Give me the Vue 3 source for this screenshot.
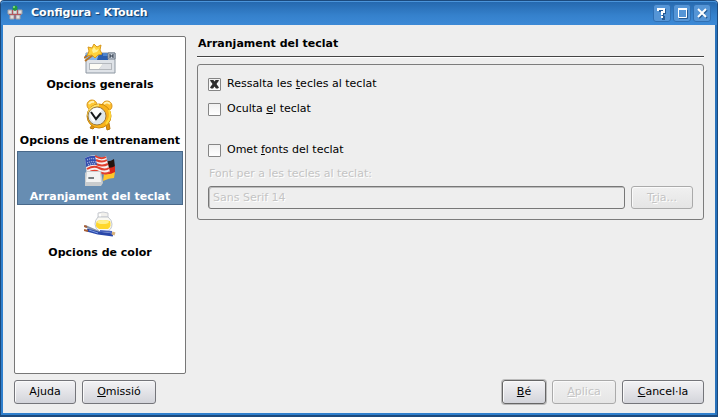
<script setup>
import { ref } from 'vue'

const pages = ['Opcions generals', "Opcions de l'entrenament", 'Arranjament del teclat', 'Opcions de color']
const current = ref(2)
const highlight = ref(true)
const hide = ref(false)
const override = ref(false)
const font = ref('Sans Serif 14')
</script>

<template>
  <div class="window">
    <header class="titlebar">
      <svg class="app-icon" viewBox="0 0 16 16" aria-hidden="true">
        <path d="M1 5h4v4H1zM6 5h4v4H6zM11 5h4v4h-4zM3 10h4v4H3zM9 10h4v4H9z" fill="#e4dedc" stroke="#a3a1a5" />
        <path d="M5.500 5v4M10.500 5v4M2 9.500h12M8 10v4" stroke="#b5565b" fill="none" />
        <path d="M8 3v3" stroke="#3d5a48" />
        <circle cx="8" cy="3" r="2.500" fill="#249a3c" />
        <circle cx="7" cy="2" r="1" fill="#8de58d" />
      </svg>
      <h1>Configura - KTouch</h1>
      <button class="wm" type="button" aria-label="Ajuda de la finestra">
        <svg viewBox="0 0 16 16"><path class="shade" d="M5 6h2V5h4v3H9v3M8 12h2v2H8" /><path d="M4 6V4h6v3H8v3M8 11v2" /></svg>
      </button>
      <button class="wm" type="button" aria-label="Maximitza">
        <svg viewBox="0 0 16 16"><path class="shade thin" d="M13.500 5v8.500H5" /><path class="thin" d="M4.500 4v8.500h8V4.500" /><path d="M4 4h9" /></svg>
      </button>
      <button class="wm" type="button" aria-label="Tanca">
        <svg viewBox="0 0 16 16"><path class="shade" d="M5 5l8 8M13 5l-8 8" /><path d="M4 4l8 8M12 4l-8 8" /></svg>
      </button>
    </header>

    <div class="body">
      <nav class="pages">
        <button
          v-for="(name, i) in pages"
          :key="name"
          type="button"
          class="page"
          :class="{ selected: i === current }"
          @click="current = i"
        >
          <svg v-if="i === 0" viewBox="0 0 32 32" aria-hidden="true">
            <path d="M2 10h29v20H2z" fill="#dfe3e8" stroke="#8d97a2" />
            <path d="M2 10h17l-4 7H2z" fill="#86b6ea" />
            <path d="M15 10h9v7H13z" fill="#2c5fae" />
            <path d="M19 10h5v3h-5z" fill="#4f86cf" />
            <path d="M24 10h7v6h-7z" fill="#d3dae4" stroke="#6c7886" />
            <path d="M26 11v4M29 11v4M26 13h3" stroke="#243040" />
            <path d="M5 20h23v7H5z" fill="#b4b8bd" />
            <path d="M6 21h13l-4 5H6z" fill="#fdfcf5" />
            <path d="M19 21h8v5H15z" fill="#dfe1e5" />
            <path d="M0 15l6-4M1 18l8-6" stroke="#ba7221" stroke-width="2" />
            <path d="M1 13l6-3" stroke="#4a78bd" />
            <path d="M10 1l3 3 4-2-1 5 2 4-4 1-3 3-3-3-5 1 2-5-1-4 4 1z" fill="#ffd23c" stroke="#d9991d" />
            <path d="M10 4l2 3 3-1-2 3-4 1-1-3z" fill="#fff298" />
          </svg>
          <svg v-else-if="i === 1" viewBox="0 0 32 32" aria-hidden="true">
            <path d="M8 26l-2 3 3 1 3-3M22 26l1 5 3-1-1-6" fill="#e4930a" stroke="#b97a10" />
            <circle cx="8" cy="6" r="5" fill="#ffc934" stroke="#d8951c" />
            <circle cx="23" cy="7" r="5" fill="#ffbd2b" stroke="#d8951c" />
            <path d="M5 5q2-3 5-2M20 5q3-3 6 0" stroke="#fff1b0" stroke-width="2" fill="none" />
            <circle cx="15" cy="17" r="12" fill="#f9b21a" stroke="#c98a12" />
            <path d="M4 17Q5 7 15 6" stroke="#ffe36a" stroke-width="2" fill="none" />
            <circle cx="13" cy="17" r="9" fill="#dfe7ea" stroke="#9a7b42" />
            <path d="M6 16a7 7 0 0 1 12-5l-8 12q-4-2-4-7" fill="#fff" />
            <path d="M7 13l5 7 5-6" stroke="#171a1c" stroke-width="2" fill="none" />
            <path d="M25 11q3 8-3 14" stroke="#ffda38" stroke-width="2" fill="none" />
          </svg>
          <svg v-else-if="i === 2" viewBox="0 0 32 32" aria-hidden="true">
            <path d="M21 6q5 1 9-2l1 8q-4 3-9 1z" fill="#25140f" />
            <path d="M22 12q5 2 9-1v7q-4 3-10 2z" fill="#d82518" />
            <path d="M20 19q6 1 11-2l-1 6q-5 0-11 3z" fill="#ffc62b" />
            <path d="M1 3q7-4 11-2 6 3 10 0l4 16q-5 4-11 1-6-2-12 2z" fill="#f9f1ef" />
            <path d="M11 1q6 4 11 1M12 5q6 3 11 0M12 9q6 3 12 0M3 14q7-4 12-1 6 3 10 0M4 18q6-4 11-1 6 3 11 0" stroke="#e0402f" stroke-width="2" fill="none" />
            <path d="M1 3q6-3 10-2l2 9q-5-1-11 2z" fill="#334eae" />
            <path d="M3 5q4-2 8-1M3 8q4-2 9-1M4 10q4-2 8-1" stroke="#eef2fb" stroke-dasharray="1 1" fill="none" />
            <path d="M1 18l2-2h14l2 12-2 3H1z" fill="#c9ccce" />
            <path d="M3 17h13l1 10H2z" fill="#f2f3f3" />
            <path d="M5 23h5M5 22v2M7 22v2M9 22v2" stroke="#4c5558" />
          </svg>
          <svg v-else viewBox="0 0 32 32" aria-hidden="true">
            <path d="M14 2q5-2 10 0v4H14z" fill="#f1f0ec" stroke="#c9ccd2" />
            <path d="M16 3v3" stroke="#fff" stroke-width="2" />
            <path d="M14 6h10q4 3 4 7 0 6-6 8h-6q-5-3-5-8 0-4 3-7z" fill="#faf9f3" stroke="#c2c7cd" />
            <path d="M13 10q6-2 13 0 2 5-2 8h-9q-5-3-2-8z" fill="#ffd72b" />
            <ellipse cx="19" cy="11" rx="6" ry="2" fill="#fff08a" />
            <path d="M1 15l14 6 3 2" stroke="#8794a8" stroke-width="2" fill="none" />
            <path d="M3 19l11 3 15 2" stroke="#2947a9" stroke-width="3" fill="none" />
            <path d="M5 19l9 3" stroke="#7798e3" fill="none" />
            <path d="M16 20l12 1" stroke="#4661bd" stroke-width="2" />
            <path d="M0 15l3 1M0 19l4 1" stroke="#a85f35" stroke-width="2" />
            <path d="M28 22l3 1" stroke="#d9b27a" stroke-width="3" />
          </svg>
          <span>{{ name }}</span>
        </button>
      </nav>

      <main class="content">
        <h2>Arranjament del teclat</h2>
        <section class="group">
          <label class="check"><input v-model="highlight" type="checkbox" /><span>Ressalta les <u>t</u>ecles al teclat</span></label>
          <label class="check"><input v-model="hide" type="checkbox" /><span>Oculta <u>e</u>l teclat</span></label>
          <label class="check apart"><input v-model="override" type="checkbox" /><span>Omet <u>f</u>onts del teclat</span></label>
          <label class="font-label" :class="{ off: !override }" for="key-font">Font per a les tecles al teclat:</label>
          <div class="font-row">
            <input id="key-font" v-model="font" type="text" readonly :disabled="!override" />
            <button class="btn choose" type="button" :disabled="!override">T<u>r</u>ia...</button>
          </div>
        </section>
      </main>
    </div>

    <footer class="actions">
      <button class="btn help" type="button">A<u>j</u>uda</button>
      <button class="btn defaults" type="button"><u>O</u>missió</button>
      <span class="spacer"></span>
      <button class="btn ok" type="button"><u>B</u>é</button>
      <button class="btn apply" type="button" disabled><u>A</u>plica</button>
      <button class="btn cancel" type="button"><u>C</u>ancel·la</button>
    </footer>
  </div>
</template>

<style>
body {
  background: #fff;
}
</style>

<style scoped>
* {
  box-sizing: border-box;
}
.window {
  display: flex;
  flex-direction: column;
  min-height: 100vh;
  border: 1px solid #1c4a7d;
  border-bottom-width: 2px;
  border-radius: 4px 4px 0 0;
  box-shadow: inset 2px 0 #3080cd, inset -2px 0 #2872bb, inset 0 -2px #3080cd;
  background: #eee;
  color: #000;
  font: 11px/18px "DejaVu Sans", sans-serif;
}
button,
input {
  margin: 0;
  font: inherit;
  color: inherit;
}
.titlebar {
  display: flex;
  align-items: center;
  gap: 2px;
  height: 24px;
  padding: 0 6px;
  border-radius: 3px 3px 0 0;
  box-shadow: inset 0 1px #4b95db;
  background: linear-gradient(#2467ad, #3581cc 60%, #3c89d6);
  color: #fff;
}
.app-icon {
  width: 16px;
  height: 16px;
}
h1 {
  flex: 1;
  margin: 0 0 0 6px;
  font-size: 11px;
  line-height: 18px;
  text-shadow: 1px 1px 1px #123a66;
}
.wm {
  display: flex;
  align-items: center;
  justify-content: center;
  width: 18px;
  height: 18px;
  padding: 0;
  border: 1px solid #2f6fb3;
  border-radius: 3px;
  background: #5595d6;
}
.wm svg {
  flex: none;
  width: 16px;
  height: 16px;
  fill: none;
  stroke: #fff;
  stroke-width: 2px;
}
.wm .shade {
  stroke: #265b94;
}
.wm .thin {
  stroke-width: 1px;
}
.body {
  display: flex;
  flex: 1;
  gap: 11px;
  padding: 11px 13px 0;
}
.pages {
  display: flex;
  flex-direction: column;
  flex: none;
  gap: 2px;
  width: 172px;
  padding: 2px;
  border: 1px solid #777;
  border-radius: 2px;
  background: #fff;
}
.page {
  display: flex;
  flex-direction: column;
  align-items: center;
  height: 54px;
  padding: 3px 0 0;
  border: 1px solid transparent;
  background: none;
  font-weight: bold;
  line-height: 20px;
  white-space: nowrap;
}
.page svg {
  flex: none;
  width: 32px;
  height: 32px;
}
.page.selected {
  border-color: #49698a;
  background: #678db2;
  color: #fff;
}
.content {
  flex: 1;
  min-width: 0;
}
h2 {
  margin: 0 0 7px;
  padding: 0 1px 4px;
  border-bottom: 1px solid #444;
  box-shadow: 0 1px #fff;
  font-size: 11px;
  line-height: 16px;
}
.group {
  display: flex;
  flex-direction: column;
  padding: 10px;
  border: 1px solid #7c7c7c;
  border-radius: 3px;
}
.check {
  display: flex;
  align-items: center;
  align-self: flex-start;
  gap: 6px;
  height: 18px;
  margin-bottom: 7px;
  line-height: 20px;
}
.check.apart {
  margin: 16px 0 5px;
}
.check input {
  appearance: none;
  display: grid;
  place-items: center;
  width: 13px;
  height: 13px;
  border: 1px solid #858585;
  border-radius: 1px;
  background: linear-gradient(#f0f0f0, #fff);
}
.check input:checked::after {
  content: "";
  width: 9px;
  height: 9px;
  background: #2e2e2e;
  clip-path: polygon(0 12%, 12% 0, 34% 0, 50% 22%, 66% 0, 88% 0, 100% 12%, 72% 50%, 100% 88%, 88% 100%, 66% 100%, 50% 78%, 34% 100%, 12% 100%, 0 88%, 28% 50%);
}
.font-label {
  padding-left: 1px;
  margin-bottom: 2px;
  line-height: 20px;
}
.off,
input:disabled,
.btn:disabled {
  color: #c4c4c4;
  text-shadow: 1px 1px #fff;
}
.font-row {
  display: flex;
  gap: 6px;
}
.font-row input {
  flex: 1;
  min-width: 0;
  height: 23px;
  padding: 0 4px;
  border: 1px solid #777;
  border-radius: 3px;
  box-shadow: inset 1px 1px #bbb;
  background: #eee;
}
.btn {
  height: 24px;
  padding: 0;
  border: 1px solid #74757a;
  border-radius: 3px;
  background: linear-gradient(#f3f3f5, #d3d4da);
  box-shadow: inset 1px 1px #fafafa;
}
.btn:disabled {
  border-color: #aaa;
  background: linear-gradient(#f0f0f0, #e5e5e5);
}
u {
  text-underline-offset: 1px;
}
.choose,
.help {
  width: 62px;
}
.font-row .choose {
  height: 23px;
}
.defaults {
  width: 74px;
}
.ok {
  width: 44px;
  border-color: #666;
  box-shadow: 0 0 0 1px #bbb, inset 1px 1px #fafafa;
}
.apply {
  width: 64px;
}
.cancel {
  width: 82px;
}
.actions {
  display: flex;
  gap: 6px;
  padding: 6px 13px 11px;
}
.spacer {
  flex: 1;
}
</style>
